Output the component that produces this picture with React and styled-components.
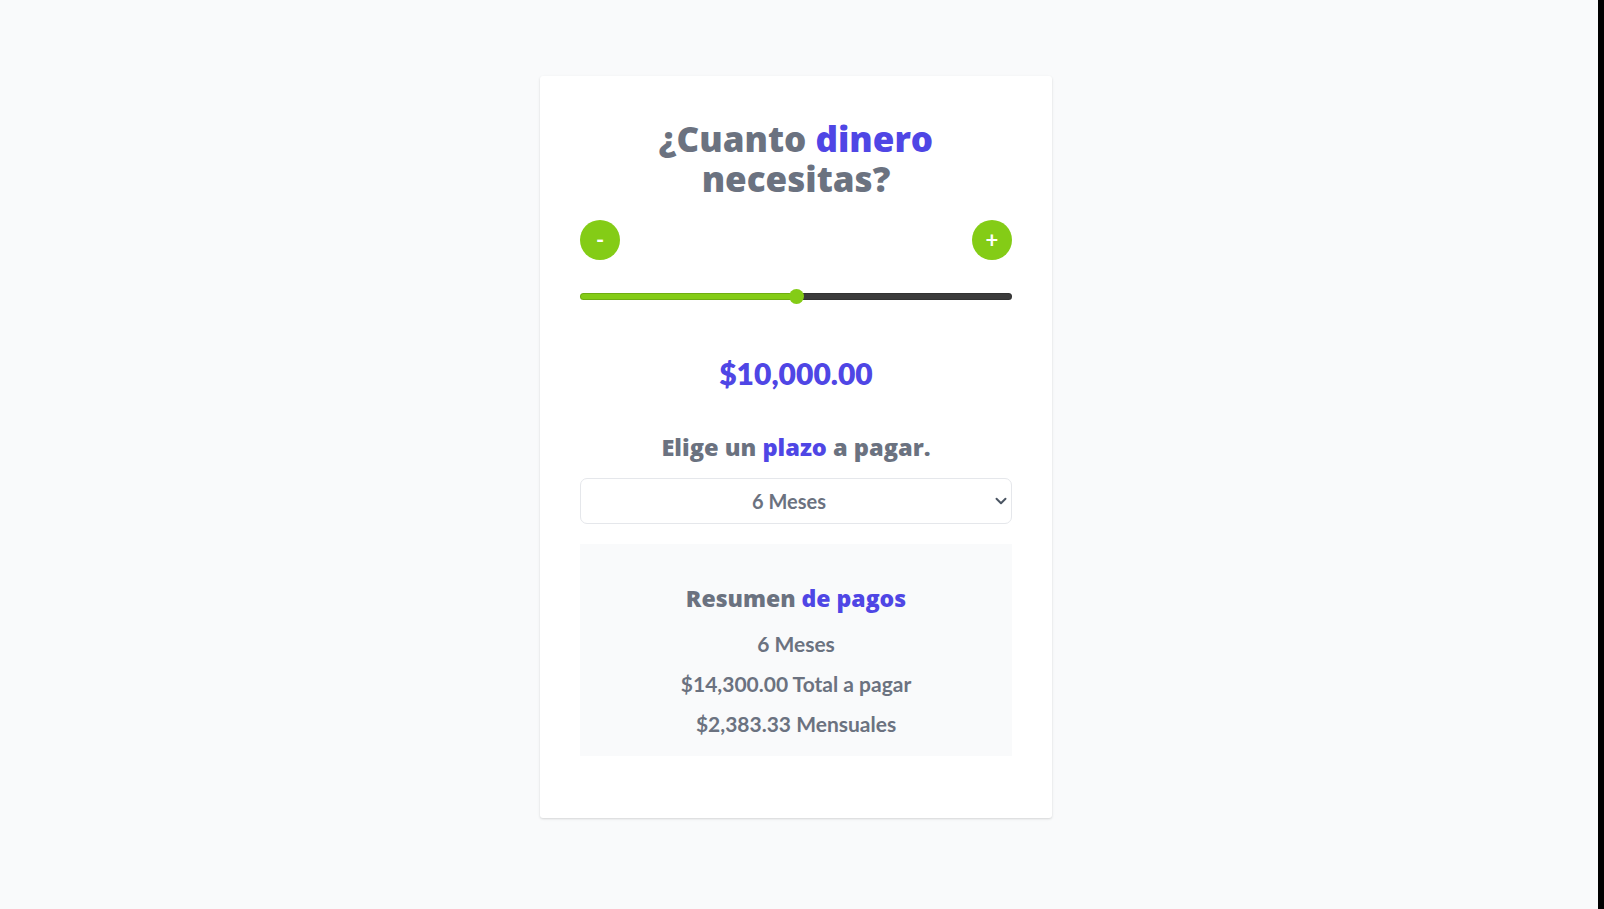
import React, { useState } from 'react'
import styled, { createGlobalStyle } from 'styled-components'
import { ChevronDown } from 'lucide-react'

const GlobalStyle = createGlobalStyle`
  html { background: #000; }
  body {
    margin: 0;
    font-family: Lato, "Open Sans", "Liberation Sans", sans-serif;
  }
  #root {
    margin-right: 6px;
    min-height: 100vh;
    background: #f9fafb;
  }
`

const heading = `"Open Sans", Lato, "Liberation Sans", sans-serif`

const Page = styled.div`
  display: flex;
  justify-content: center;
  padding: 76px 6px 0 0;
`

const Card = styled.div`
  width: 512px;
  box-sizing: border-box;
  padding: 43px 40px 62px;
  background: #fff;
  border-radius: 3px;
  box-shadow: 0 1px 3px rgba(0, 0, 0, 0.1), 0 1px 2px rgba(0, 0, 0, 0.06);
`

const Title = styled.h1`
  margin: 0;
  font-family: ${heading};
  font-size: 35px;
  line-height: 40px;
  font-weight: 800;
  text-align: center;
  color: #6b7280;
`

const Accent = styled.span`
  color: #4f46e5;
`

const Controls = styled.div`
  display: flex;
  justify-content: space-between;
  margin-top: 21px;
`

const RoundButton = styled.button`
  width: 40px;
  height: 40px;
  border: none;
  border-radius: 50%;
  background: #84cc16;
  color: #fff;
  font-family: inherit;
  font-size: 22px;
  font-weight: 700;
  line-height: 1;
  cursor: pointer;
  padding: 0;
`

const Range = styled.input`
  -webkit-appearance: none;
  appearance: none;
  display: block;
  width: 100%;
  height: 16px;
  margin: 28px 0 0;
  background: transparent;

  &::-webkit-slider-runnable-track {
    height: 7px;
    border-radius: 4px;
    background: linear-gradient(
      to right,
      #84cc16 ${p => p.$pct}%,
      #3b3b3b ${p => p.$pct}%
    );
    box-shadow: inset 0 0 0 1px rgba(0, 0, 0, 0.15);
  }

  &::-webkit-slider-thumb {
    -webkit-appearance: none;
    width: 15px;
    height: 15px;
    margin-top: -4px;
    border-radius: 50%;
    background: #84cc16;
    border: none;
  }
`

const Amount = styled.p`
  margin: 51px 0 0;
  font-size: 30px;
  line-height: 36px;
  font-weight: 800;
  text-align: center;
  color: #4f46e5;
`

const Subtitle = styled.h2`
  margin: 40px 0 0;
  font-family: ${heading};
  font-size: 23.6px;
  line-height: 32px;
  font-weight: 800;
  text-align: center;
  color: #6b7280;
`

const SelectWrap = styled.div`
  position: relative;
  margin-top: 15px;

  svg {
    position: absolute;
    right: 2px;
    top: 50%;
    transform: translateY(-50%);
    color: #4b5563;
    pointer-events: none;
  }
`

const Select = styled.select`
  -webkit-appearance: none;
  appearance: none;
  display: block;
  width: 100%;
  height: 46px;
  box-sizing: border-box;
  padding: 0 22px 0 8px;
  border: 1px solid #e5e7eb;
  border-radius: 7px;
  background: #fff;
  font-family: inherit;
  font-size: 20px;
  font-weight: 700;
  color: #6b7280;
  text-align: center;
  text-align-last: center;
`

const Summary = styled.div`
  margin-top: 20px;
  padding: 38px 20px 18px;
  background: #f9fafb;
  text-align: center;
  color: #6b7280;
`

const SummaryTitle = styled.h2`
  margin: 0;
  font-family: ${heading};
  font-size: 23px;
  line-height: 32px;
  font-weight: 800;
`

const SummaryLine = styled.p`
  margin: ${p => (p.$first ? '16px' : '12px')} 0 0;
  font-size: 21px;
  line-height: 28px;
  font-weight: 700;
`

const MIN = 0
const MAX = 20000
const STEP = 100

const money = n =>
  '$' + n.toLocaleString('en-US', { minimumFractionDigits: 2, maximumFractionDigits: 2 })

function calcTotal(amount, months) {
  let rate
  if (amount < 5000) rate = 1.5
  else if (amount < 10000) rate = 1.4
  else if (amount < 15000) rate = 1.3
  else rate = 1.2

  const plazo = { 6: 1.1, 12: 1.2, 24: 1.3 }[months]
  return amount * rate * plazo
}

export default function App() {
  const [amount, setAmount] = useState(10000)
  const [months, setMonths] = useState(6)

  const total = calcTotal(amount, months)
  const pct = ((amount - MIN) / (MAX - MIN)) * 100

  const dec = () => setAmount(a => Math.max(MIN, a - STEP))
  const inc = () => setAmount(a => Math.min(MAX, a + STEP))

  return (
    <>
      <GlobalStyle />
      <Page>
        <Card>
          <Title>
            ¿Cuanto <Accent>dinero</Accent> necesitas?
          </Title>

          <Controls>
            <RoundButton onClick={dec}>-</RoundButton>
            <RoundButton onClick={inc}>+</RoundButton>
          </Controls>

          <Range
            type="range"
            min={MIN}
            max={MAX}
            step={STEP}
            value={amount}
            $pct={pct}
            onChange={e => setAmount(Number(e.target.value))}
          />

          <Amount>{money(amount)}</Amount>

          <Subtitle>
            Elige un <Accent>plazo</Accent> a pagar.
          </Subtitle>

          <SelectWrap>
            <Select value={months} onChange={e => setMonths(Number(e.target.value))}>
              <option value={6}>6 Meses</option>
              <option value={12}>12 Meses</option>
              <option value={24}>24 Meses</option>
            </Select>
            <ChevronDown size={18} strokeWidth={2.6} />
          </SelectWrap>

          <Summary>
            <SummaryTitle>
              Resumen <Accent>de pagos</Accent>
            </SummaryTitle>
            <SummaryLine $first>{months} Meses</SummaryLine>
            <SummaryLine>{money(total)} Total a pagar</SummaryLine>
            <SummaryLine>{money(total / months)} Mensuales</SummaryLine>
          </Summary>
        </Card>
      </Page>
    </>
  )
}
